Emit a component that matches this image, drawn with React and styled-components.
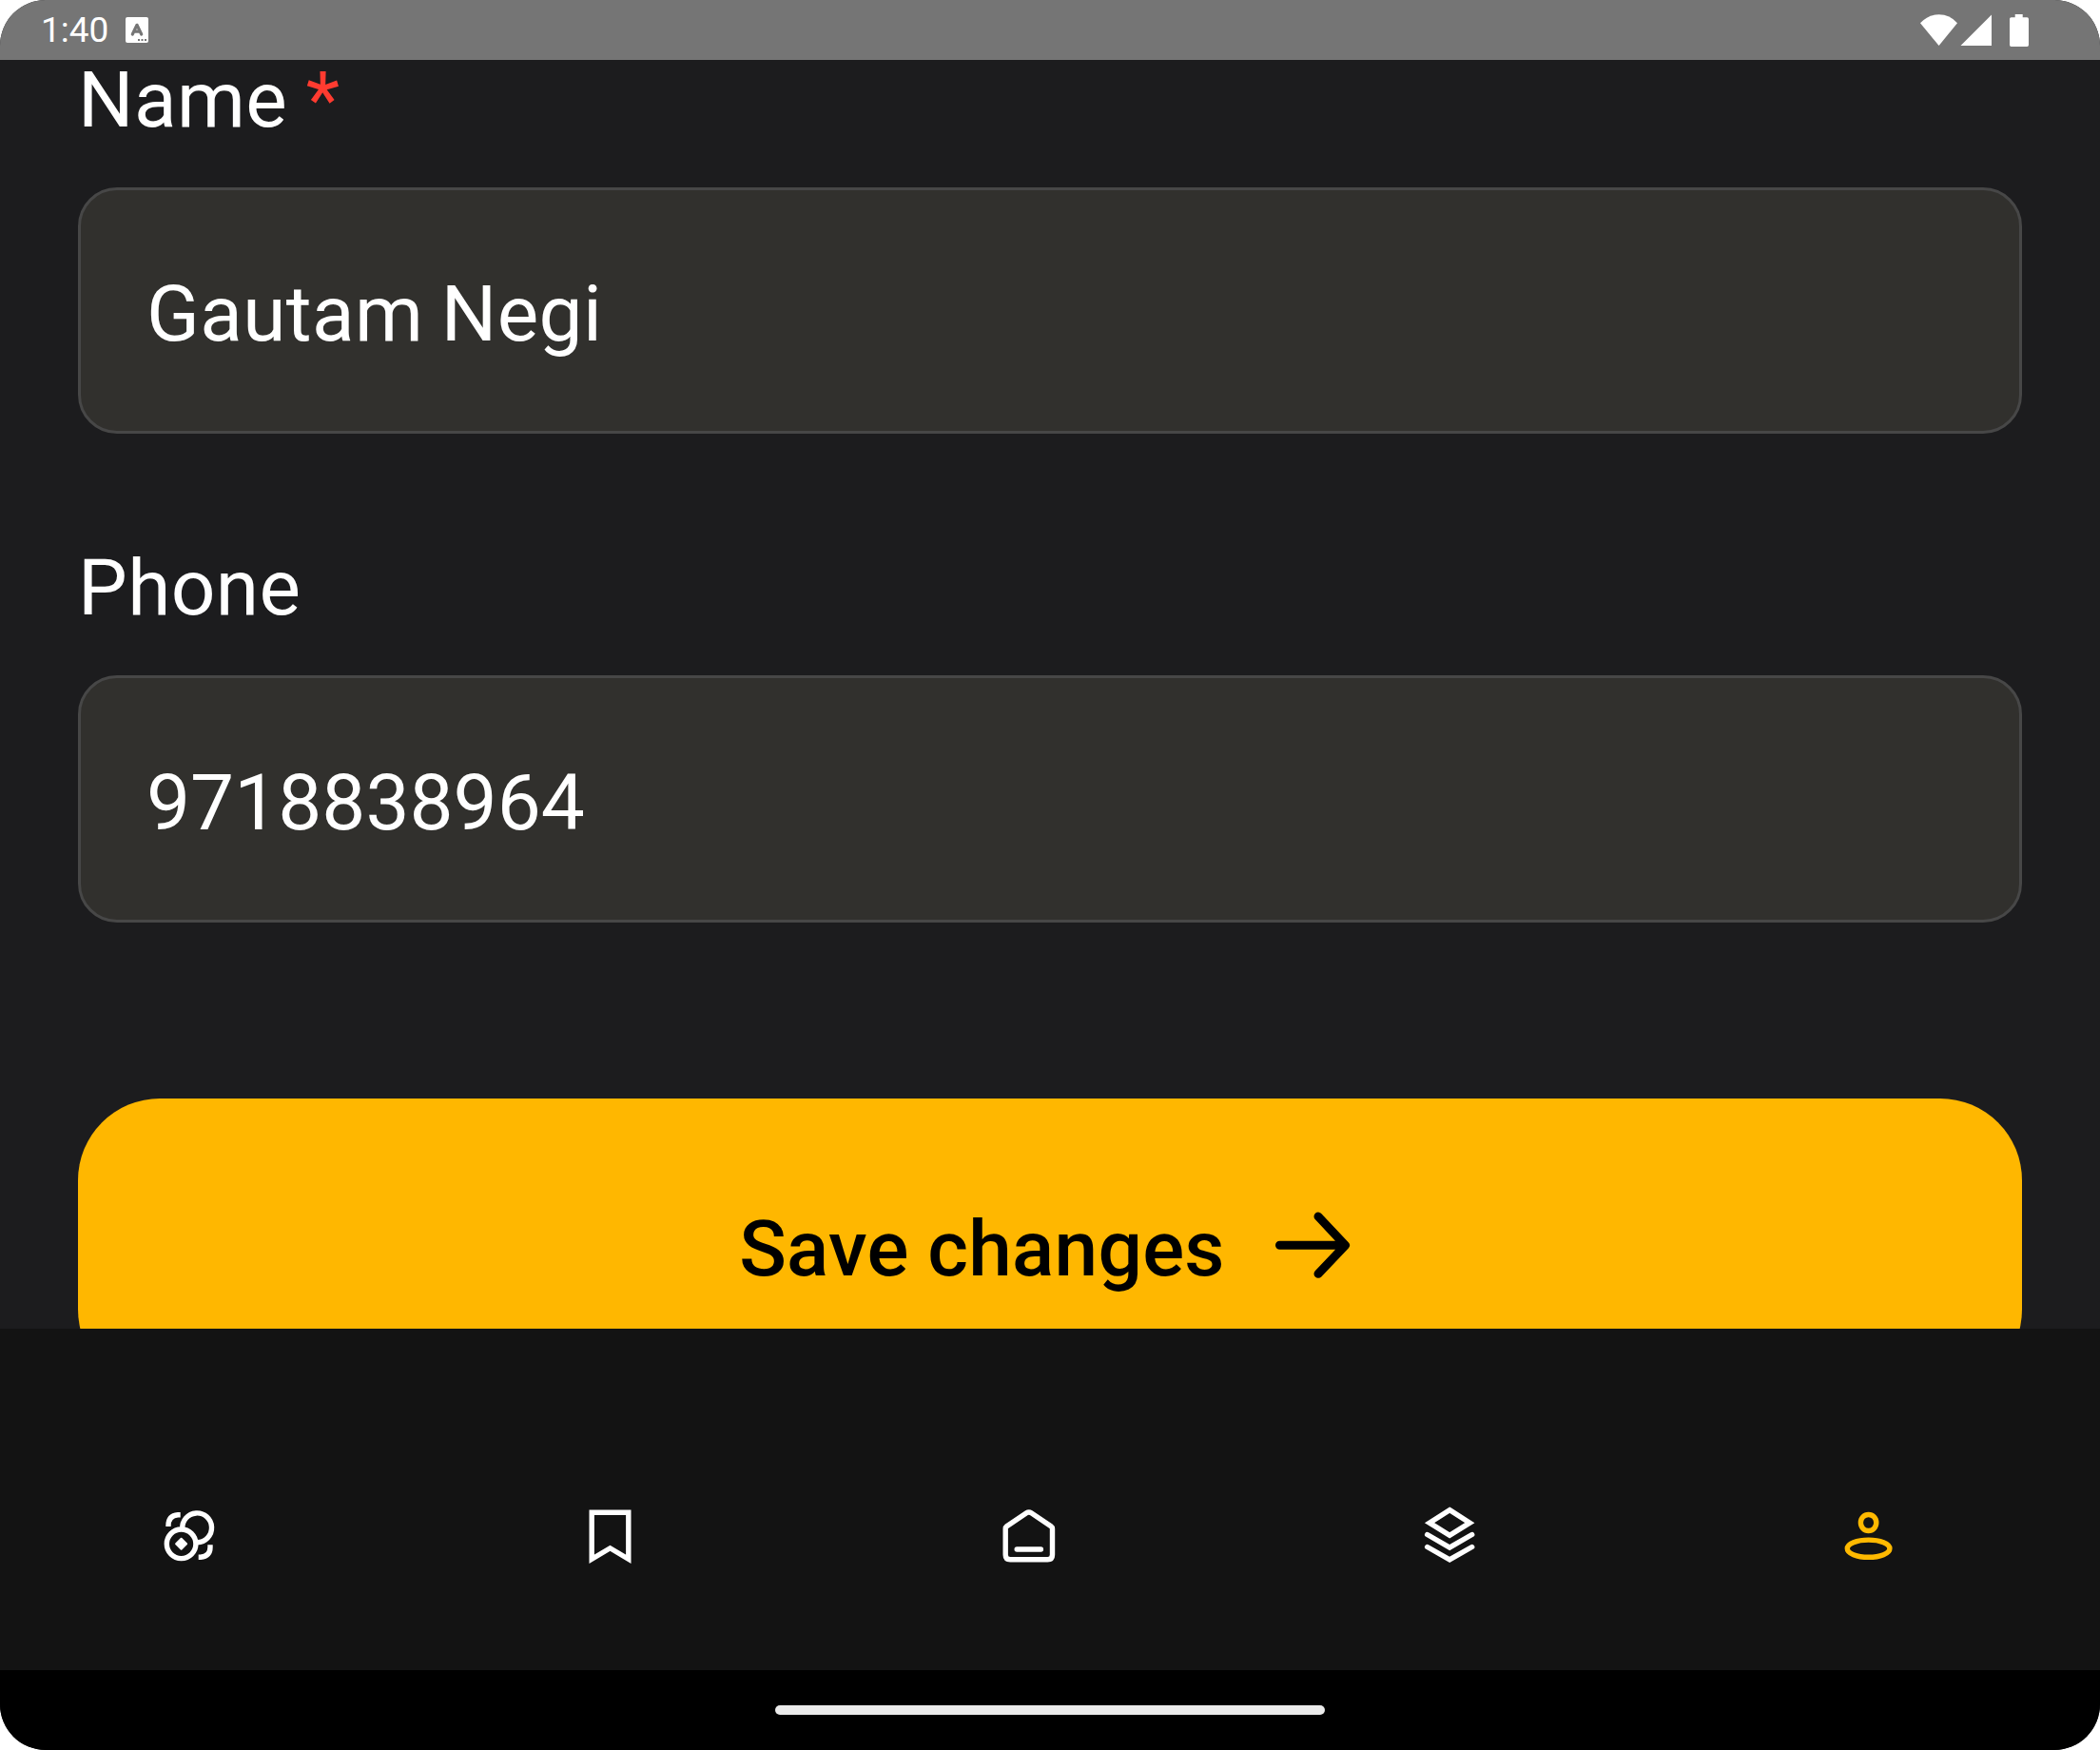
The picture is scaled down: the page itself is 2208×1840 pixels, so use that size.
import React from 'react';
import styled, { createGlobalStyle } from 'styled-components';

const Global = createGlobalStyle`
  *, *::before, *::after { box-sizing: border-box; }
  body { margin: 0; background: #fff; }
`;

const Screen = styled.div`
  display: flex;
  flex-direction: column;
  width: 2208px;
  height: 1840px;
  overflow: hidden;
  border-radius: 48px;
  background: #1c1c1e;
  color: #fff;
  font-family: Roboto, "Liberation Sans", sans-serif;
`;

const StatusBar = styled.header`
  display: flex;
  flex: none;
  align-items: center;
  justify-content: space-between;
  height: 63px;
  padding: 0 73px 0 43px;
  background: #757575;
`;

const StatusGroup = styled.div`
  display: flex;
  align-items: center;
  gap: ${(p) => p.$gap}px;
`;

const Clock = styled.span`
  font-size: 37px;
  line-height: 63px;
`;

const Glyph = styled.svg`
  display: block;
  flex: none;
`;

const Content = styled.main`
  display: flex;
  flex-direction: column;
  flex: none;
  height: 1334px;
  padding: 0 82px;
  overflow: hidden;
`;

const Field = styled.div`
  display: flex;
  flex: none;
  flex-direction: column;
  gap: 43px;
  margin-bottom: ${(p) => p.$after}px;
`;

const Label = styled.label`
  height: 91px;
  font-size: 82px;
  line-height: 84px;
  letter-spacing: 0.4px;
  word-spacing: -1px;
  white-space: pre;
`;

const Required = styled.span`
  color: #ff3b30;
`;

const Input = styled.div`
  display: flex;
  align-items: center;
  height: 259.3px;
  padding: 7px 69px 0;
  border: 3px solid #474747;
  border-radius: 41px;
  background: #31302d;
  font-size: 82px;
  line-height: 96px;
  letter-spacing: ${(p) => (p.$numeric ? 0 : 0.4)}px;
  word-spacing: -2.4px;
`;

const SaveButton = styled.button`
  display: flex;
  flex: none;
  align-items: center;
  justify-content: center;
  gap: 39px;
  height: 308px;
  padding: 0;
  border: 0;
  border-radius: 86px;
  background: #ffb700;
  color: #000;
  font: 500 82px/96px Roboto, "Liberation Sans", sans-serif;
`;

const ButtonText = styled.span`
  padding-top: 8px;
  letter-spacing: 0.25px;
  word-spacing: -1px;
`;

const TabBar = styled.nav`
  display: grid;
  grid-template-columns: repeat(5, 441.6px);
  flex: none;
  height: 359px;
  padding-top: 182px;
  background: #131313;
`;

const Tab = styled.a`
  display: flex;
  align-items: flex-start;
  padding-left: 162px;
  color: ${(p) => (p.$active ? '#ffb900' : '#fff')};
`;

const GestureArea = styled.footer`
  display: flex;
  flex: 1;
  align-items: center;
  justify-content: center;
  background: #000;
`;

const GestureHandle = styled.div`
  width: 578px;
  height: 10px;
  border-radius: 5px;
  background: #ebebeb;
`;

const TabIcon = ({ children }) => (
  <Glyph width="72" height="72" viewBox="0 0 72 72" fill="none" stroke="currentColor" strokeWidth="5.4">
    {children}
  </Glyph>
);

const tabs = [
  {
    id: 'coins',
    icon: (
      <>
        <circle cx="28.6" cy="44.3" r="15.3" />
        <path d="M29.8 28.6A15.4 15.4 0 1 1 45.500 42.700" />
        <path d="M15 26v-1.100q0-10.200 10-11.200h2.700M46.700 58.300h2.300q10-1 10-10.300v-2.700" />
        <path d="M28.600 38.700l5.500 5.500-5.500 5.500-5.500-5.500z" fill="currentColor" strokeWidth="2" strokeLinejoin="round" />
      </>
    ),
  },
  {
    id: 'saved',
    icon: <path d="M18.200 11.200h38.600v49L37.500 48.800 18.200 60.200z" />,
  },
  {
    id: 'home',
    icon: (
      <>
        <path d="M12.200 28.200Q12.200 26.800 13.600 25.700L34.300 11.800Q36.800 10.200 39.300 11.800L60 25.700Q61.500 26.800 61.500 28.200V55.700Q61.500 60.700 56.500 60.700H17.200Q12.200 60.700 12.200 55.700Z" />
        <path d="M24.200 50h25.200" strokeLinecap="round" />
      </>
    ),
  },
  {
    id: 'layers',
    icon: (
      <>
        <path d="M37.200 8.600l21.200 13.500-21.200 13.200L16 22.100z" />
        <path d="M13.700 34.500L37.200 48.100 60.700 34.500M13.700 47.500L37.200 60.800 60.700 47.500" strokeLinecap="round" />
      </>
    ),
  },
  {
    id: 'profile',
    active: true,
    icon: (
      <>
        <ellipse cx="36.600" cy="22" rx="8.200" ry="8.500" />
        <ellipse cx="36.600" cy="49.200" rx="22.300" ry="9.100" />
      </>
    ),
  },
];

export default function App() {
  return (
    <>
      <Global />
      <Screen>
        <StatusBar>
          <StatusGroup $gap={18}>
            <Clock>1:40</Clock>
            <Glyph width="24" height="27" viewBox="0 0 24 27">
              <rect width="24" height="27" rx="2" fill="#fff" />
              <path d="M7.300 18L12 8.300L16.700 18M9 15.200h6" fill="none" stroke="#757575" strokeWidth="3.200" strokeLinecap="round" strokeLinejoin="round" />
              <path d="M13 23h2v2h-2zM16.500 23h2v2h-2zM20 23h2v2h-2z" fill="#757575" />
            </Glyph>
          </StatusGroup>
          <StatusGroup $gap={0}>
            <Glyph width="116" height="34" viewBox="0 0 116 34" fill="#fff">
              <path d="M0 9.300Q8 0.300 19.600 0.300T39 9.300L19.600 33z" />
              <path d="M75 0.500V33H42.500z" />
              <path d="M99.700 0h8v3.300h4.600q1.700 0 1.700 1.700v27.300q0 1.700-1.700 1.700H95.700Q94 34 94 32.300V5q0-1.700 1.700-1.700h4z" />
            </Glyph>
          </StatusGroup>
        </StatusBar>
        <Content>
          <Field $after={120.1}>
            <Label>Name <Required>*</Required></Label>
            <Input>Gautam Negi</Input>
          </Field>
          <Field $after={185.300}>
            <Label>Phone</Label>
            <Input $numeric>9718838964</Input>
          </Field>
          <SaveButton>
            <ButtonText>Save changes</ButtonText>
            <Glyph width="104" height="72" viewBox="0 0 104 72" fill="none" stroke="#000" strokeWidth="9" strokeLinecap="round" strokeLinejoin="round">
              <path d="M18.500 36.300H87M59 6L87.500 36.300L59 66.300" />
            </Glyph>
          </SaveButton>
        </Content>
        <TabBar>
          {tabs.map((tab) => (
            <Tab key={tab.id} $active={tab.active}>
              <TabIcon>{tab.icon}</TabIcon>
            </Tab>
          ))}
        </TabBar>
        <GestureArea>
          <GestureHandle />
        </GestureArea>
      </Screen>
    </>
  );
}
